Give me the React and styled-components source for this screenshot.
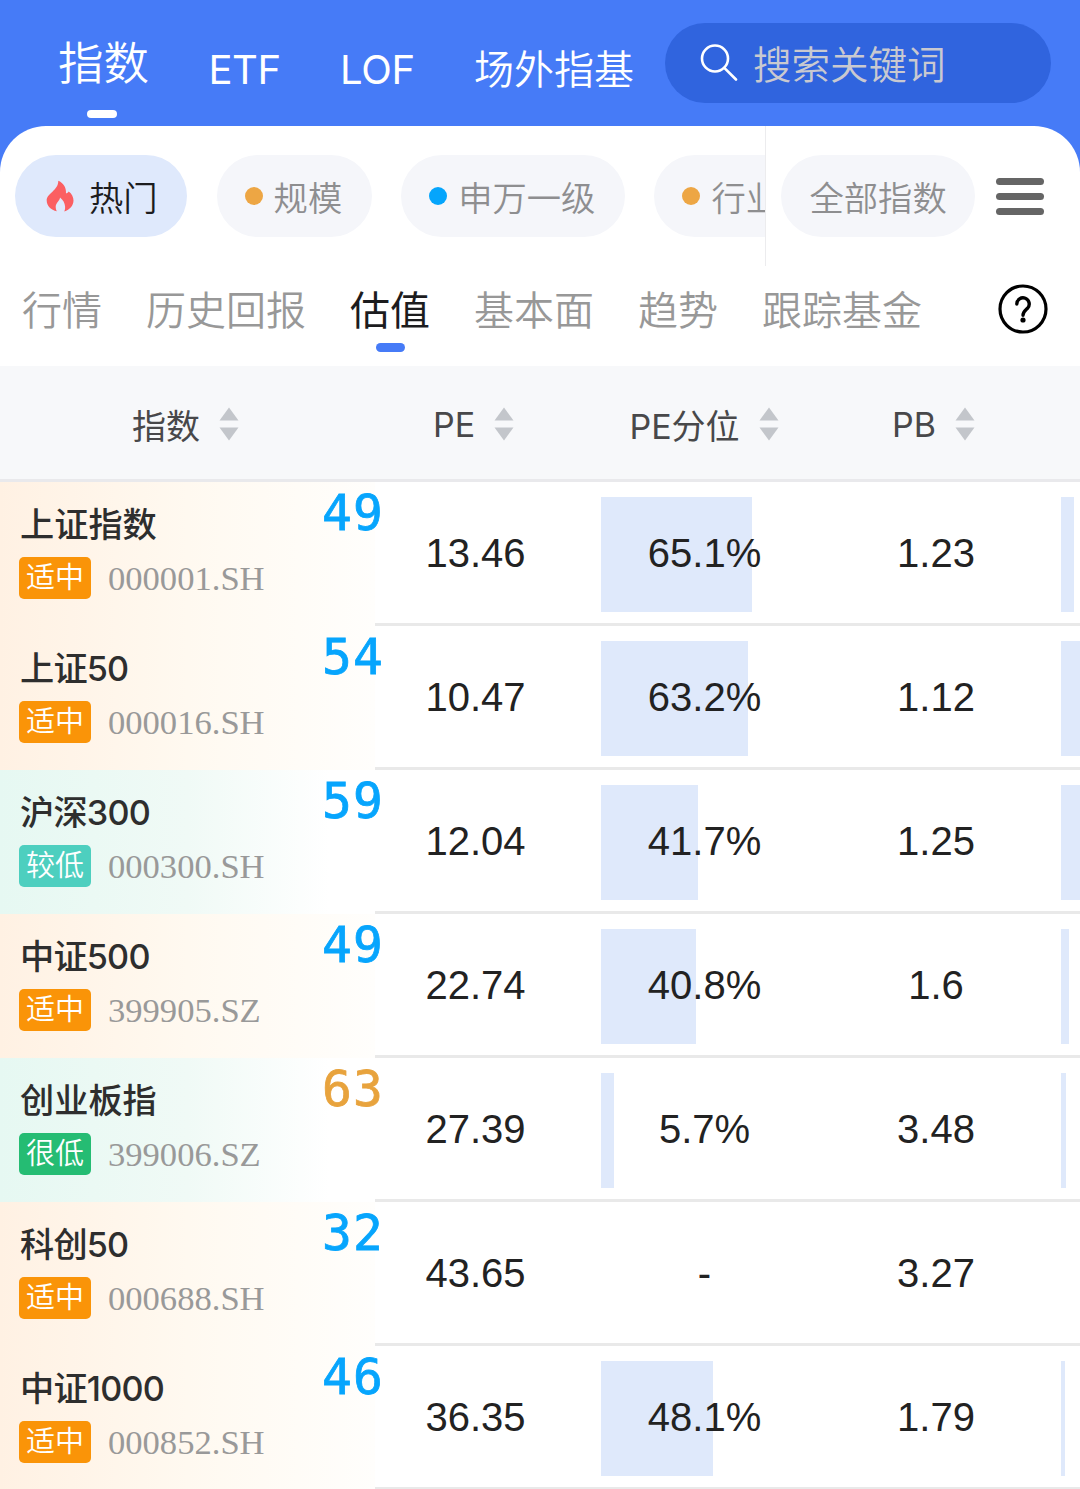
import React, { useState } from "react";
import styled, { createGlobalStyle } from "styled-components";

const GlobalStyle = createGlobalStyle`
  * {
    box-sizing: border-box;
  }

  body {
    margin: 0;
    background: #fff;
    font-family: Inter, "Noto Sans CJK SC", sans-serif;
    overflow: hidden;
  }

  button {
    padding: 0;
    border: none;
    background: none;
    font: inherit;
    color: inherit;
    cursor: pointer;
  }
`;

const Page = styled.div`
  width: 1080px;
  height: 1489px;
  overflow: hidden;
  background: #467bf7;
`;

const TopBar = styled.header`
  display: flex;
  align-items: flex-start;
  height: 126px;
  padding: 23px 29px 0 58px;
`;

const TopTabs = styled.nav`
  display: flex;
  flex: 1;
  justify-content: space-between;
  padding-right: 31px;
`;

const TopTab = styled.button`
  display: flex;
  flex-direction: column;
  align-items: center;
  height: 96px;
  padding-top: ${(p) => (p.$active ? "7px" : "17px")};
  font-size: ${(p) => (p.$active ? "45.5px" : "40px")};
  font-weight: ${(p) => (p.$latin ? 400 : 350)};
  letter-spacing: ${(p) => (p.$latin ? "-0.4px" : 0)};
  line-height: ${(p) => (p.$active ? "68px" : "60px")};
  color: #fff;
  white-space: nowrap;

  &::after {
    content: "";
    display: ${(p) => (p.$active ? "block" : "none")};
    width: 30px;
    height: 8px;
    margin: 12px 4px 0 0;
    border-radius: 4px;
    background: #fff;
  }
`;

const SearchBox = styled.div`
  display: flex;
  align-items: center;
  gap: 15px;
  width: 386px;
  height: 80px;
  padding: 0 0 2px 35px;
  border-radius: 40px;
  background: #3064de;
  font-size: 38.5px;
  font-weight: 350;
  color: #c9c9d0;
`;

const Sheet = styled.main`
  border-radius: 46px 46px 0 0;
  background: #fff;
  overflow: hidden;
`;

const FilterBar = styled.div`
  display: flex;
  height: 140px;
`;

const FilterScroll = styled.div`
  display: flex;
  gap: 29.5px;
  width: 766px;
  padding: 29px 0 0 15px;
  border-right: 1px solid #ececee;
  overflow: hidden;
`;

const FilterSide = styled.div`
  display: flex;
  gap: 21px;
  padding: 29px 0 0 15px;
`;

const Pill = styled.button`
  display: flex;
  flex: none;
  align-items: center;
  height: 82px;
  padding: ${(p) => (p.$plain ? "0 28.5px 1px" : "0 29.5px 1px 28px")};
  border-radius: 41px;
  background: ${(p) => (p.$active ? "#dfe9fc" : "#f5f6fa")};
  font-size: 34.3px;
  font-weight: 350;
  color: ${(p) => (p.$active ? "#1c1c1e" : "#8e8e90")};
  white-space: nowrap;
`;

const Dot = styled.span`
  width: 18px;
  height: 18px;
  margin-right: 11px;
  border-radius: 50%;
  background: ${(p) => p.$color};
`;

const MenuButton = styled.button`
  display: flex;
  flex-direction: column;
  justify-content: center;
  gap: 8px;
  height: 83px;
`;

const MenuLine = styled.span`
  width: 48px;
  height: 7px;
  border-radius: 3.5px;
  background: #656565;
`;

const SectionTabs = styled.nav`
  display: flex;
  align-items: flex-start;
  gap: 44px;
  height: 100px;
  padding: 15px 32px 0 22px;
`;

const SectionTab = styled.button`
  display: flex;
  flex-direction: column;
  align-items: center;
  font-size: 40px;
  font-weight: ${(p) => (p.$active ? 400 : 350)};
  line-height: 60px;
  color: ${(p) => (p.$active ? "#1c1c1e" : "#989898")};
  white-space: nowrap;

  &::after {
    content: "";
    width: 29px;
    height: 9px;
    margin-top: 2px;
    border-radius: 5px;
    background: ${(p) => (p.$active ? "#467bf7" : "transparent")};
  }
`;

const HelpButton = styled.button`
  height: 50px;
  margin: 3px 0 0 auto;
`;

const columns = "375px 226px 230px 230px 19px";

const TableHead = styled.div`
  display: grid;
  grid-template-columns: ${columns};
  height: 116px;
  border-bottom: 3px solid #e9e9ec;
  background: #f7f8fa;
`;

const HeadCell = styled.button`
  display: flex;
  align-items: center;
  justify-content: center;
  gap: 19px;
  padding: 3px ${(p) => p.$shift || 0}px 0 0;
  font-size: 34px;
  font-weight: 400;
  color: #48484a;
`;

const Row = styled.div`
  display: grid;
  grid-template-columns: ${columns};
  height: 144px;
`;

const tones = {
  mid: { badge: "#fa9408", wash: "#fff1e3, #fff9f0 50%, #fffefc" },
  low: { badge: "#4dcfbf", wash: "#e6f8f2, #f0faf6 50%, #fff 88%" },
  veryLow: { badge: "#25bc73", wash: "#e6f8f2, #f0faf6 50%, #fff 88%" },
};

const NameCell = styled.div`
  position: relative;
  padding: 17px 0 0 20px;
  background: linear-gradient(90deg, ${(p) => tones[p.$tone].wash});
`;

const Name = styled.div`
  font-size: 34.2px;
  font-weight: 500;
  line-height: 51px;
  letter-spacing: ${(p) => (p.$latin ? "-0.8px" : 0)};
  color: #2e2e2e;
`;

const CodeLine = styled.div`
  display: flex;
  align-items: center;
  gap: 17px;
  margin: 7px 0 0 -1px;
`;

const Badge = styled.span`
  width: 72px;
  height: 42px;
  border-radius: 5px;
  background: ${(p) => tones[p.$tone].badge};
  font-size: 29px;
  font-weight: 350;
  line-height: 41px;
  text-align: center;
  color: #fff;
`;

const Code = styled.span`
  font-family: "Liberation Serif", serif;
  font-size: 34.6px;
  line-height: 42px;
  color: #999;
`;

const Score = styled.span`
  position: absolute;
  top: 1px;
  right: -9px;
  font-family: "DejaVu Sans Mono", monospace;
  font-size: 49.5px;
  line-height: 60px;
  letter-spacing: 1.2px;
  -webkit-text-stroke: 0.8px currentColor;
  color: ${(p) => (p.$high ? "#e8a33d" : "#07a5fd")};
`;

const ValueCell = styled.div`
  display: grid;
  align-items: center;
  border-bottom: 3px solid #e9e9e9;
  overflow: hidden;
`;

const Bar = styled.div`
  grid-area: 1 / 1;
  align-self: start;
  height: 115px;
  margin-top: 14.5px;
  background: #dfe9fb;
`;

const Value = styled.span`
  grid-area: 1 / 1;
  padding: 2px ${(p) => p.$shift || 23}px 0 0;
  font-family: "Liberation Sans", sans-serif;
  font-size: 40px;
  text-align: center;
  color: #222;
`;

const topTabs = ["指数", "ETF", "LOF", "场外指基"];
const sectionTabs = ["行情", "历史回报", "估值", "基本面", "趋势", "跟踪基金"];

const filters = [
  { label: "热门" },
  { label: "规模", dot: "#eda644" },
  { label: "申万一级", dot: "#05a5fc" },
  { label: "行业", dot: "#eda644" },
];

const rows = [
  { name: "上证指数", code: "000001.SH", tone: "mid", tag: "适中", score: 49, pe: "13.46", rank: 65.1, pb: "1.23", next: 13 },
  { name: "上证50", code: "000016.SH", tone: "mid", tag: "适中", score: 54, pe: "10.47", rank: 63.2, pb: "1.12", next: 60 },
  { name: "沪深300", code: "000300.SH", tone: "low", tag: "较低", score: 59, pe: "12.04", rank: 41.7, pb: "1.25", next: 60 },
  { name: "中证500", code: "399905.SZ", tone: "mid", tag: "适中", score: 49, pe: "22.74", rank: 40.8, pb: "1.6", next: 8 },
  { name: "创业板指", code: "399006.SZ", tone: "veryLow", tag: "很低", score: 63, pe: "27.39", rank: 5.7, pb: "3.48", next: 5 },
  { name: "科创50", code: "000688.SH", tone: "mid", tag: "适中", score: 32, pe: "43.65", rank: null, pb: "3.27", next: 0 },
  { name: "中证1000", code: "000852.SH", tone: "mid", tag: "适中", score: 46, pe: "36.35", rank: 48.1, pb: "1.79", next: 4 },
];

const SearchIcon = () => (
  <svg width="38" height="38" viewBox="0 0 38 38" fill="none" stroke="#fff" strokeWidth="2.6">
    <circle cx="15" cy="15.500" r="13" />
    <path d="M24.3 24.8 36 36.500" strokeLinecap="round" />
  </svg>
);

const Flame = styled.svg`
  width: 28px;
  height: 32px;
  margin: 0 15px 0 3px;
  fill: #fb5f62;
`;

const FlameIcon = () => (
  <Flame viewBox="0 0 28 32">
    <path d="M12.300.7c4.700 2 8.100 6.300 7.700 12.600 1.200-.2 2-.8 2.700-1.900 3 2 4.800 5.300 4.800 9.200 0 5-3.700 9.400-9.200 10.900.7-1.600 1-3.200.8-4.900-.3-3.600-2-6.700-5.100-9.100-.2 3.600-4 5-4.300 9 0 1.900.3 3.400 1.200 4.800C5 30.200.700 26.100.700 20.600.700 12.800 12.300 11 12.300.7Z" />
  </Flame>
);

const SortIcon = () => (
  <svg width="20" height="34" viewBox="0 0 20 34" fill="#c3c6cb">
    <path d="M10 .5 19.500 13.500H.5Z" />
    <path d="M10 33.500 19.500 20.500H.5Z" />
  </svg>
);

const HelpIcon = () => (
  <svg width="50" height="50" viewBox="0 0 50 50" fill="none" stroke="#000">
    <circle cx="25" cy="25" r="23" strokeWidth="3.2" />
    <path d="M18.800 20a6.200 6.200 0 1 1 10.700 4.300c-2.500 2.500-4.500 3.600-4.500 7" strokeWidth="3.400" strokeLinecap="round" />
    <circle cx="25" cy="36" r="2.600" fill="#000" stroke="none" />
  </svg>
);

function IndexRow({ row }) {
  return (
    <Row>
      <NameCell $tone={row.tone}>
        <Name $latin={/\d/.test(row.name)}>{row.name}</Name>
        <CodeLine>
          <Badge $tone={row.tone}>{row.tag}</Badge>
          <Code>{row.code}</Code>
        </CodeLine>
        <Score $high={row.score > 60}>{row.score}</Score>
      </NameCell>
      <ValueCell>
        <Value $shift={25}>{row.pe}</Value>
      </ValueCell>
      <ValueCell>
        {row.rank !== null && <Bar style={{ width: row.rank * 2.325 }} />}
        <Value>{row.rank === null ? "-" : `${row.rank}%`}</Value>
      </ValueCell>
      <ValueCell>
        <Value $shift={20}>{row.pb}</Value>
      </ValueCell>
      <ValueCell>
        <Bar style={{ width: row.next }} />
      </ValueCell>
    </Row>
  );
}

function App() {
  const [market, setMarket] = useState("指数");
  const [filter, setFilter] = useState("热门");
  const [section, setSection] = useState("估值");

  return (
    <Page>
      <GlobalStyle />
      <TopBar>
        <TopTabs>
          {topTabs.map((tab) => (
            <TopTab
              key={tab}
              $active={tab === market}
              $latin={/^[A-Z]+$/.test(tab)}
              onClick={() => setMarket(tab)}
            >
              {tab}
            </TopTab>
          ))}
        </TopTabs>
        <SearchBox>
          <SearchIcon />
          搜索关键词
        </SearchBox>
      </TopBar>

      <Sheet>
        <FilterBar>
          <FilterScroll>
            {filters.map((f) => (
              <Pill key={f.label} $active={f.label === filter} onClick={() => setFilter(f.label)}>
                {f.dot ? <Dot $color={f.dot} /> : <FlameIcon />}
                {f.label}
              </Pill>
            ))}
          </FilterScroll>
          <FilterSide>
            <Pill $plain>全部指数</Pill>
            <MenuButton>
              <MenuLine />
              <MenuLine />
              <MenuLine />
            </MenuButton>
          </FilterSide>
        </FilterBar>

        <SectionTabs>
          {sectionTabs.map((tab) => (
            <SectionTab key={tab} $active={tab === section} onClick={() => setSection(tab)}>
              {tab}
            </SectionTab>
          ))}
          <HelpButton>
            <HelpIcon />
          </HelpButton>
        </SectionTabs>

        <TableHead>
          <HeadCell $shift={4}>指数 <SortIcon /></HeadCell>
          <HeadCell $shift={29}>PE <SortIcon /></HeadCell>
          <HeadCell $shift={24}>PE分位 <SortIcon /></HeadCell>
          <HeadCell $shift={25}>PB <SortIcon /></HeadCell>
        </TableHead>

        {rows.map((row) => (
          <IndexRow key={row.code} row={row} />
        ))}
      </Sheet>
    </Page>
  );
}

export default App;
